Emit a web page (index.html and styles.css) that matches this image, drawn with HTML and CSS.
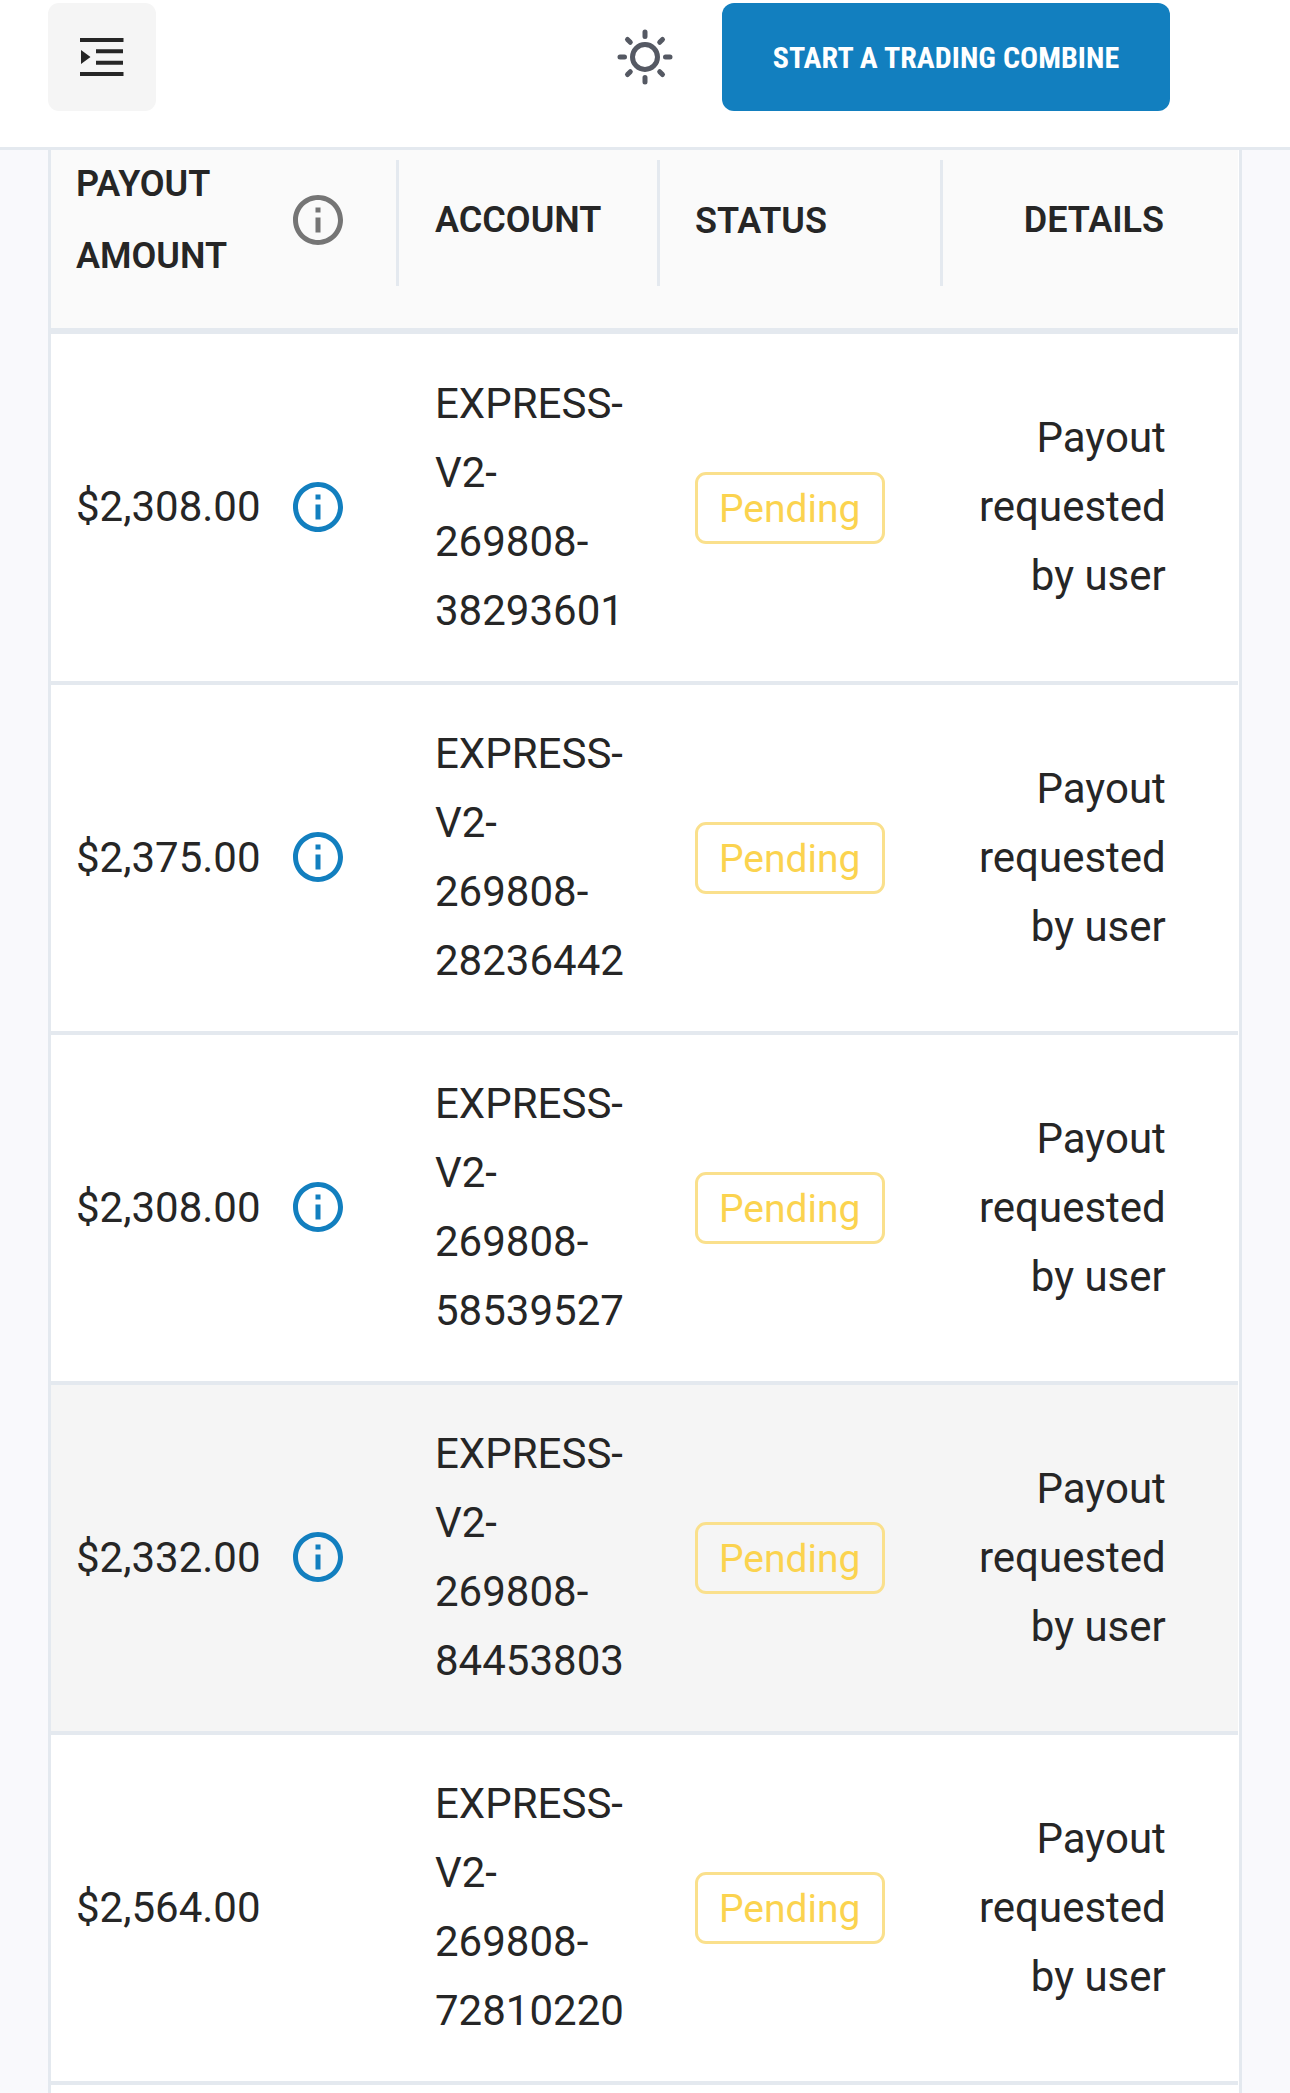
FILE: index.html
```
<!DOCTYPE html>
<html lang="en">
<head>
    <meta charset="UTF-8">
    <meta name="viewport" content="width=device-width, initial-scale=1.0">
    <title>Payouts</title>
    <link rel="stylesheet" href="styles.css">
</head>
<body>
    <svg class="sprite">
        <symbol id="info" viewBox="0 0 24 24">
            <path d="M11 7h2v2h-2zm0 4h2v6h-2zm1-9C6.48 2 2 6.48 2 12s4.48 10 10 10 10-4.48 10-10S17.52 2 12 2zm0 18c-4.41 0-8-3.59-8-8s3.59-8 8-8 8 3.59 8 8-3.59 8-8 8z"/>
        </symbol>
    </svg>

    <header class="topbar">
        <button class="menu-button" aria-label="Open menu">
            <svg width="44" height="38" viewBox="0 0 44 38">
                <path d="M0 0h43.5v4H0zM16 11.3h27v4H16zM16 22.7h27v4H16zM0 34h43.5v4H0zM1 12l9.500 7L1 26z"/>
            </svg>
        </button>
        <svg class="theme-icon" width="56" height="56" viewBox="0 0 56 56">
            <circle cx="28" cy="28" r="12.500"/>
            <path d="M28 3v4.500M28 48.500V53M3 28h4.500M48.500 28H53M10.500 10.500l2.800 2.800M42.700 42.700l2.800 2.800M10.500 45.500l2.800-2.800M42.700 13.300l2.800-2.800"/>
        </svg>
        <button class="start-button"><span>START A TRADING COMBINE</span></button>
    </header>

    <main class="table">
        <div class="row head">
            <div class="cell amount"><span class="label">PAYOUT AMOUNT</span><svg class="info"><use href="#info"/></svg></div>
            <div class="cell">ACCOUNT</div>
            <div class="cell status">STATUS</div>
            <div class="cell details">DETAILS</div>
        </div>
        <div class="row first">
            <div class="cell amount">$2,308.00<svg class="info"><use href="#info"/></svg></div>
            <div class="cell">EXPRESS-<br>V2-<br>269808-<br>38293601</div>
            <div class="cell status"><span class="badge">Pending</span></div>
            <div class="cell details">Payout<br>requested<br>by user</div>
        </div>
        <div class="row">
            <div class="cell amount">$2,375.00<svg class="info"><use href="#info"/></svg></div>
            <div class="cell">EXPRESS-<br>V2-<br>269808-<br>28236442</div>
            <div class="cell status"><span class="badge">Pending</span></div>
            <div class="cell details">Payout<br>requested<br>by user</div>
        </div>
        <div class="row">
            <div class="cell amount">$2,308.00<svg class="info"><use href="#info"/></svg></div>
            <div class="cell">EXPRESS-<br>V2-<br>269808-<br>58539527</div>
            <div class="cell status"><span class="badge">Pending</span></div>
            <div class="cell details">Payout<br>requested<br>by user</div>
        </div>
        <div class="row active">
            <div class="cell amount">$2,332.00<svg class="info"><use href="#info"/></svg></div>
            <div class="cell">EXPRESS-<br>V2-<br>269808-<br>84453803</div>
            <div class="cell status"><span class="badge">Pending</span></div>
            <div class="cell details">Payout<br>requested<br>by user</div>
        </div>
        <div class="row">
            <div class="cell amount">$2,564.00</div>
            <div class="cell">EXPRESS-<br>V2-<br>269808-<br>72810220</div>
            <div class="cell status"><span class="badge">Pending</span></div>
            <div class="cell details">Payout<br>requested<br>by user</div>
        </div>
    </main>
</body>
</html>
```
FILE: styles.css
```
* {
    box-sizing: border-box;
}
body {
    margin: 0;
    height: 2093px;
    overflow: hidden;
    display: flex;
    flex-direction: column;
    font-family: Roboto, sans-serif;
    color: #262626;
    background-color: #f9f9fc;
}
button {
    border: none;
    padding: 0;
    font-family: inherit;
    cursor: pointer;
}
.sprite {
    display: none;
}
.topbar {
    flex: none;
    display: flex;
    align-items: flex-start;
    height: 150px;
    padding: 3px 120px 0 48px;
    background-color: #fff;
    border-bottom: 3px solid #e4e9ef;
}
.menu-button {
    display: flex;
    align-items: center;
    justify-content: center;
    width: 108px;
    height: 108px;
    border-radius: 11px;
    background-color: #f5f5f5;
    fill: #262626;
}
.theme-icon {
    margin: 26px 49px 0 auto;
    fill: none;
    stroke: #555963;
    stroke-width: 5;
    stroke-linecap: round;
}
.start-button {
    width: 448px;
    height: 108px;
    border-radius: 12px;
    background-color: #127fbf;
    color: #fff;
    font-size: 30px;
    font-weight: 700;
    font-stretch: condensed;
    letter-spacing: 0.04px;
}
.start-button span {
    display: inline-block;
    white-space: nowrap;
}
.table {
    flex: 1;
    margin: 0 48px;
    padding-right: 1px;
    background-color: #fff;
    border: solid #e4e9ef;
    border-width: 0 3px;
}
.row {
    display: grid;
    grid-template-columns: 348px 261px 283px 1fr;
    height: 350px;
    border-bottom: 4px solid #e4e9ef;
    font-size: 42px;
    line-height: 69px;
}
.row.first {
    height: 351px;
}
.row.active {
    background-color: #f5f5f5;
}
.cell {
    display: flex;
    align-items: center;
    padding-left: 36px;
    padding-bottom: 2px;
}
.cell.amount {
    padding-left: 25px;
}
.cell.status {
    padding-left: 35px;
    padding-bottom: 0;
}
.cell.details {
    justify-content: flex-end;
    padding-right: 74px;
    text-align: right;
}
.info {
    flex: none;
    width: 60px;
    height: 60px;
    margin-left: 27px;
    fill: #127fbf;
}
.badge {
    height: 72px;
    padding: 0 21px;
    border: 3px solid #fae08c;
    border-radius: 11px;
    color: #fbd34f;
    font-size: 39px;
    line-height: 68px;
}
.row.head {
    height: 184px;
    padding: 10px 0 42px;
    border-bottom-width: 6px;
    background-color: #fafafa;
    font-size: 36px;
    font-weight: 600;
    line-height: 72px;
}
.head .cell {
    height: 126px;
    padding-bottom: 6px;
    border-right: 3px solid #e4e9ef;
}
.head .cell.status {
    padding-bottom: 4px;
}
.head .cell.details {
    border-right: none;
}
.head .label {
    width: 185px;
}
.head .info {
    fill: #757575;
}
```
